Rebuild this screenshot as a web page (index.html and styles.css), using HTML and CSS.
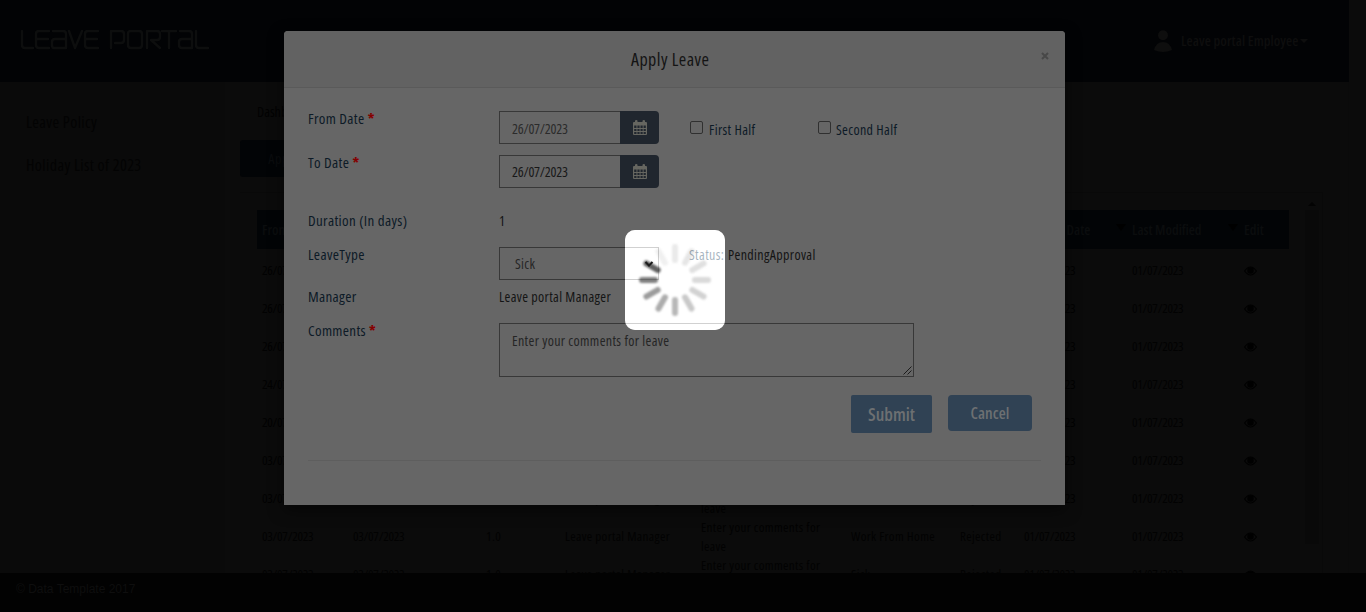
FILE: index.html
```
<!DOCTYPE html>
<html lang="en">
<head>
<meta charset="utf-8">
<title>Leave Portal</title>
<link rel="stylesheet" href="styles.css">
</head>
<body>
<header class="topbar">
  <svg class="logo" width="190" height="20" viewBox="0 0 190 20" fill="none" stroke="#0d0e0e" stroke-width="2.4" stroke-linecap="round" stroke-linejoin="round" aria-label="Leave Portal">
    <path d="M2 1v14q0 3 3 3h8M29 1H19q-3 0-3 3v11q0 3 3 3h10M16 9h12M33 1h10q3 0 3 3v14H34q-2 0-2-3v-3q0-3 3-3h11M49 1l6 17 7-17M78 1H68q-3 0-3 3v11q0 3 3 3h10M65 9h12"/>
    <path d="M91 18V1h10q3 0 3 3v6q0 3-3 3H95M111 1h8q3 0 3 3v11q0 3-3 3h-8q-3 0-3-3V4q0-3 3-3M127 18V1h10q3 0 3 3v3q0 3-3 3h-6l9 8M142 1h14M149 1v17M160 1h9q3 0 3 3v14h-10q-3 0-3-3v-3q0-3 3-3h10M176 1v14q0 3 3 3h9"/>
  </svg>
  <div class="user">
    <svg width="18" height="22" viewBox="0 0 18 22" fill="#0e0e0e"><circle cx="9" cy="5.2" r="5"/><path d="M0 20Q2 12 9 12t9 8q-9 4-18 0z"/></svg>
    <span class="user-name">Leave portal Employee</span><i class="caret"></i>
  </div>
</header>
<div class="page">
  <nav class="side"><a>Leave Policy</a><a>Holiday List of 2023</a></nav>
  <main class="main">
    <div class="crumb">Dashboard</div>
    <button class="apply">Apply Leave</button>
    <div class="grid-wrap">
      <div class="grid">
        <div class="row head"><span>From Date</span><span></span><span></span><span></span><span></span><span></span><span></span><span class="filter"><b>Created Date</b><i></i></span><span class="filter"><b>Last Modified</b><i></i></span><span>Edit</span></div>
        <div id="rows"></div>
      </div>
      <div class="scroll"><i></i><b></b></div>
    </div>
  </main>
</div>
<footer class="foot">© Data Template 2017</footer>

<section class="modal">
  <div class="modal-head"><h1>Apply Leave</h1><svg class="close" width="8" height="8" viewBox="0 0 8 8" stroke="#484848" stroke-width="2"><path d="M1 1l6 6M7 1L1 7"/></svg></div>
  <form class="form">
    <div class="field f1"><label>From Date <em>*</em></label>
      <div class="date muted"><span>26/07/2023</span><i><svg width="14" height="15" viewBox="0 0 14 15"><use href="#cal"/></svg></i></div>
      <span class="check c1"><input type="checkbox"><span>First Half</span></span>
      <span class="check c2"><input type="checkbox"><span>Second Half</span></span></div>
    <div class="field f2"><label>To Date <em>*</em></label>
      <div class="date"><span>26/07/2023</span><i><svg width="14" height="15" viewBox="0 0 14 15"><use href="#cal"/></svg></i></div></div>
    <div class="field f3"><label>Duration (In days)</label><span class="value">1</span></div>
    <div class="field f4"><label>LeaveType</label><div class="select"><span>Sick</span></div>
      <span class="status"><span class="key">Status:</span> <span class="val">PendingApproval</span></span></div>
    <div class="field f5"><label>Manager</label><span class="value">Leave portal Manager</span></div>
    <div class="field f6"><label>Comments <em>*</em></label><div class="area"><span>Enter your comments for leave</span><svg width="9" height="9" viewBox="0 0 9 9" stroke="#1c1c1c"><path d="M.5 8.500l8-8M4.500 8.500l4-4"/></svg></div></div>
    <div class="actions"><button class="submit">Submit</button><button class="cancel">Cancel</button></div>
    <hr>
  </form>
</section>

<div class="loader"></div>
<svg class="spinner" width="100" height="100" viewBox="0 0 100 100"><g id="spokes" class="spokes" stroke-width="6" stroke-linecap="round"></g><path d="M20.500 32l3.500 3.500 3.500-3.500" fill="none" stroke="#1c1c1c" stroke-width="2"/></svg>

<svg width="0" height="0" class="defs"><symbol id="cal" viewBox="0 0 14 15"><path fill="#666660" fill-rule="evenodd" d="M1 2h1V1q0-1 1.300-1t1.200 1v1h5V1q0-1 1.300-1T12 1v1h1q1 0 1 1v11q0 1-1 1H1q-1 0-1-1V3q0-1 1-1zM1.200 5.500V8h2.300V5.500zm3.200 0V8h2.200V5.500zm3.100 0V8h2.200V5.500zm3.100 0V8h2.200V5.500zM1.200 8.900v2.100h2.300V8.900zm3.200 0v2.100h2.200V8.900zm3.100 0v2.100h2.200V8.900zm3.100 0v2.100h2.200V8.900zM1.200 11.900V14h2.300v-2.100zm3.200 0V14h2.200v-2.100zm3.100 0V14h2.200v-2.100zm3.100 0V14h2.200v-2.100z"/></symbol></svg>
<script src="app.js"></script>
</body>
</html>
```
FILE: styles.css
```
* { box-sizing: border-box; }
body { margin: 0; width: 1366px; height: 612px; overflow: hidden; display: flex; flex-direction: column; background: #0b0b0b; color: #020202; font: 14px/19px "Open Sans", "Liberation Sans Narrow", sans-serif; font-stretch: 75%; }
button { font: inherit; border: 0; padding: 0; }
.topbar { width: 1349px; height: 82px; flex: none; background: #020305; display: flex; justify-content: space-between; padding: 30px 41px 0 20px; }
.user { display: flex; color: #0e0e0e; height: 22px; align-items: center; }
.user-name { margin: -2px 0 0 9px; font-weight: 600; width: 117px; white-space: nowrap; letter-spacing: .1px; }
.caret { border: 4px solid transparent; border-top-color: #0e0e0e; border-bottom: 0; margin-left: 2px; }
.page { display: flex; height: 491px; flex: none; overflow: hidden; width: 1349px; border-right: 1px solid #0a0a0a; }
.side { width: 226px; padding: 31px 0 0 26px; display: flex; flex-direction: column; gap: 24px; font-size: 16px; letter-spacing: .4px; color: #030303; background: #0a0a0a; border-right: 1px solid #0b0b0b; }
.main { flex: 1; padding: 20px 0 0 14px; }
.crumb { margin-left: 17px; }
.apply { display: block; width: 120px; height: 37px; margin-top: 19px; background: #020406; color: #0a0c0e; border-radius: 3px; letter-spacing: .6px; }
.grid-wrap { display: flex; margin-top: 15px; padding: 17px 0 0 17px; width: 1083px; border: 1px solid #090909; border-left: 0; }
.grid { width: 1032px; }
.row { display: grid; grid-template-columns: 91px 133px 79px 136px 150px 109px 64px 108px 112px 45px; padding-left: 5px; height: 38px; align-items: center; white-space: nowrap; font-size: 13px; letter-spacing: .38px; }
.row .day { letter-spacing: -.25px; }
.row .note { white-space: normal; width: 130px; padding-top: 1px; }
.row svg { display: block; }
.head { height: 39px; background: #020406; color: #0b0d0e; font-weight: 600; margin-bottom: 2px; font-size: 14px; letter-spacing: 0; }
.filter { display: flex; justify-content: space-between; padding-right: 6px; }
.filter b { font-weight: 600; }
.filter i { border: 5px solid transparent; border-top: 7px solid #000; border-bottom: 0; height: 7px; margin-top: 4px; }
.scroll { width: 14px; margin: -8px 0 0 16px; height: 342px; }
.scroll i { display: block; width: 8px; border: 4px solid transparent; border-bottom-color: #030303; border-top: 0; margin-left: 3px; }
.scroll b { display: block; height: 334px; margin-top: 4px; background: #090909; }
.foot { height: 39px; flex: none; background: #020202; color: #0e0e0e; padding: 7px 16px; font: 12px/18px "Liberation Sans", sans-serif; }
.modal { position: absolute; left: 284px; top: 31px; width: 781px; height: 474px; background: #666; border-radius: 4px 4px 0 0; color: #141414; box-shadow: 0 5px 15px rgba(0,0,0,.5); }
.modal-head { height: 57px; background: #626262; border-bottom: 1px solid #5a5a5a; border-radius: 4px 4px 0 0; display: flex; padding-top: 16px; }
h1 { margin: 0 0 0 347px; font-size: 18px; line-height: 24px; font-weight: 400; letter-spacing: .45px; white-space: nowrap; }
.close { margin: 5px 16px 0 auto; }
.form { padding: 23px 24px 0; }
.field { display: flex; white-space: nowrap; align-items: flex-start; letter-spacing: .36px; font-size: 14px; }
label { width: 191px; color: #0d1a26; font-size: 15px; letter-spacing: .34px; flex: none; }
em { color: #850000; font-style: normal; font-weight: 700; }
.f1, .f2 { height: 44px; }
.f1 label, .f2 label { margin-top: -2px; }
.date { width: 160px; height: 33px; display: flex; letter-spacing: -.22px; }
.date span { width: 121px; border: 1px solid #383838; border-right: 0; padding: 6px 0 0 12px; color: #181818; }
.date.muted span { color: #2b2b2b; padding-top: 7px; }
.date i { width: 39px; background: #20262e; border-radius: 0 4px 4px 0; display: flex; align-items: center; justify-content: center; }
.check { display: flex; height: 19px; margin-top: 9px; color: #0d1a26; }
.c1 { margin-left: 31px; width: 128px; }
input { appearance: none; width: 13px; height: 13px; margin: 1px 6px 0 0; border: 1px solid #303030; border-radius: 2px; background: #666; }
.c2 input { margin-right: 5px; }
.f3 { height: 48px; padding-top: 12px; }
.f4 { height: 41px; }
.f4 label { margin-top: -2px; }
.select { width: 160px; height: 33px; border: 1px solid #383838; padding: 6px 6px 0 15px; color: #252525; }
.status { margin: -2px 0 0 30px; display: flex; gap: 3px; }
.key { color: #0d1a26; width: 36px; }
.f5 { height: 35px; }
.f5 label { margin-top: -1px; }
.value { margin-top: -1px; }
.f3 .value { margin-top: 0; }
.f6 { height: 72px; }
.f6 label { margin-top: -2px; }
.area { width: 415px; height: 54px; border: 1px solid #383838; padding: 7px 0 0 12px; color: #252525; display: flex; justify-content: space-between; }
.area svg { margin: 35px 1px 0 0; }
.actions { display: flex; justify-content: flex-end; gap: 16px; padding-right: 9px; align-items: flex-start; height: 65px; }
.actions button { background: #304254; color: #6d7072; font-weight: 600; border-radius: 4px; }
.actions .submit { width: 81px; height: 38px; font-size: 18px; border-radius: 2px; }
.actions .cancel { width: 84px; height: 36px; font-size: 16px; letter-spacing: .1px; }
hr { margin: 0; border: 0; border-top: 1px solid #5e5e5e; }
.loader, .spinner { position: absolute; left: 625px; top: 230px; width: 100px; height: 100px; }
.loader { border-radius: 10px; background: rgba(255,255,255,.6); backdrop-filter: brightness(2.5); }
.spinner { mix-blend-mode: multiply; }
.spokes { filter: blur(1px); }
.defs { position: absolute; }
```
FILE: app.js
```
const rows = ['26/07/2023', '26/07/2023', '26/07/2023', '24/07/2023', '20/07/2023', '03/07/2023', '03/07/2023', '03/07/2023', '03/07/2023'];
const eye = '<svg width="13" height="10" viewBox="0 0 13 10"><path d="M.6 5Q6.500-3 12.400 5 6.500 13 .6 5z" fill="none" stroke="#000" stroke-width="1.200"/><circle cx="6.500" cy="4.500" r="3.200" fill="#000"/></svg>';
document.getElementById('rows').innerHTML = rows.map((d, i) =>
  `<div class="row"><span class="day">${d}</span><span class="day">${d}</span><span>1.0</span><span>Leave portal Manager</span><span class="note">Enter your comments for leave</span><span>${i === 8 ? 'Sick' : 'Work From Home'}</span><span>Rejected</span><span class="day">01/07/2023</span><span class="day">01/07/2023</span><span>${eye}</span></div>`).join('');
const shades = ['#eaeaea', '#e6e6e6', '#e0e0e0', '#dadada', '#d2d2d2', '#c9c9c9', '#b8b8b8', '#acacac', '#9c9c9c', '#808080', '#606060', '#f0f0f0'];
document.getElementById('spokes').innerHTML = shades.map((c, k) =>
  `<path d="M50 17v13" stroke="${c}" transform="rotate(${k * 30} 50 50)"/>`).join('');
```
